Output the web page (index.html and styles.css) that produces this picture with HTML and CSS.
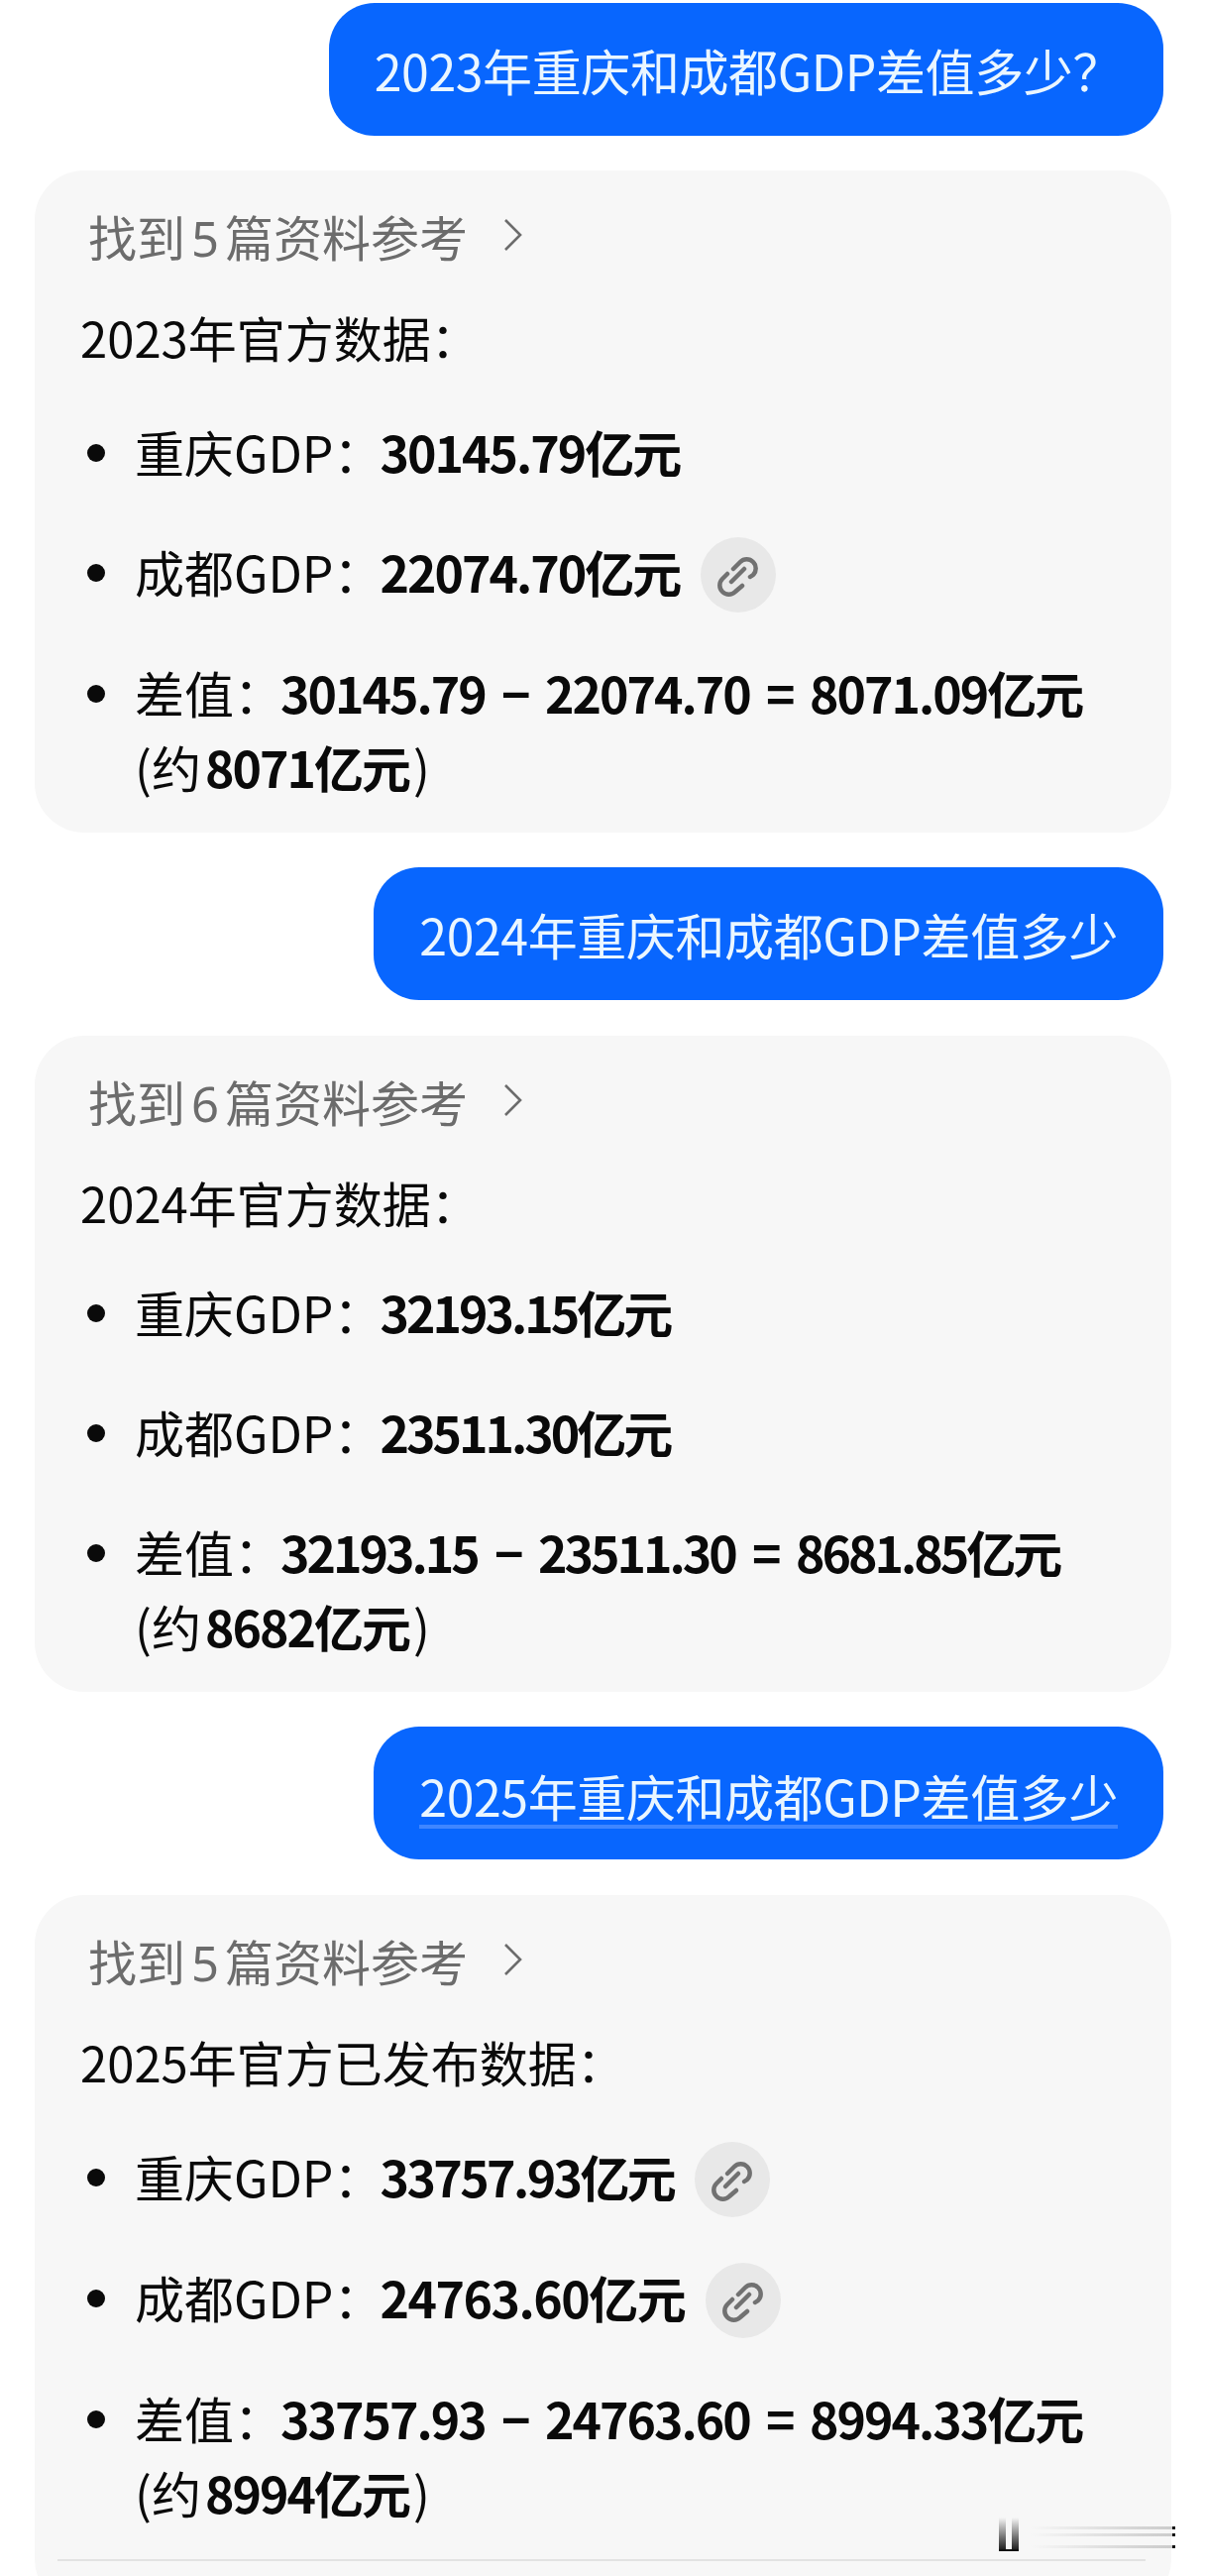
FILE: index.html
```html
<!DOCTYPE html>
<html lang="zh-CN">
<head>
  <meta charset="UTF-8">
  <meta name="viewport" content="width=device-width, initial-scale=1.0">
  <title>重庆和成都GDP差值</title>
  <link rel="stylesheet" href="styles.css">
</head>
<body>
  <svg class="defs" width="0" height="0" aria-hidden="true">
    <symbol id="link" viewBox="0 0 76 76">
      <path d="M33 32l7-7a9 9 0 0 1 13 13l-3 2M42 49l-7 6a9 9 0 0 1-13-13l5-5M31 45l13-13" fill="none" stroke="#717171" stroke-width="4.500" stroke-linecap="round"/>
    </symbol>
    <symbol id="chev" viewBox="0 0 24 36">
      <path d="M4 3l15 15L4 33" fill="none" stroke="#6c6c6c" stroke-width="2.600"/>
    </symbol>
  </svg>

  <main class="chat">
    <div class="q q-a">2023年重庆和成都GDP差值多少？</div>
    <section class="card">
      <div class="refs"><span>找到<span class="refs-n">5</span>篇资料参考</span><svg class="chev"><use href="#chev"/></svg></div>
      <p class="lead">2023年官方数据：</p>
      <ul class="list list-gap">
        <li>重庆GDP：<b>30145.79亿元</b></li>
        <li>成都GDP：<b>22074.70亿元</b><span class="link"><svg><use href="#link"/></svg></span></li>
        <li>差值：<b>30145.79 − 22074.70 = 8071.09亿元</b><br>(约<b class="approx">8071亿元</b>)</li>
      </ul>
    </section>

    <div class="q">2024年重庆和成都GDP差值多少</div>
    <section class="card">
      <div class="refs"><span>找到<span class="refs-n">6</span>篇资料参考</span><svg class="chev"><use href="#chev"/></svg></div>
      <p class="lead">2024年官方数据：</p>
      <ul class="list">
        <li>重庆GDP：<b class="tight">32193.15亿元</b></li>
        <li>成都GDP：<b class="tight">23511.30亿元</b></li>
        <li>差值：<b class="tight">32193.15 − 23511.30 = 8681.85亿元</b><br>(约<b class="approx">8682亿元</b>)</li>
      </ul>
    </section>

    <div class="q"><span class="q-edit">2025年重庆和成都GDP差值多少</span></div>
    <section class="card card-last">
      <div class="refs"><span>找到<span class="refs-n">5</span>篇资料参考</span><svg class="chev"><use href="#chev"/></svg></div>
      <p class="lead">2025年官方已发布数据：</p>
      <ul class="list list-gap">
        <li>重庆GDP：<b class="snug">33757.93亿元</b><span class="link"><svg><use href="#link"/></svg></span></li>
        <li>成都GDP：<b class="loose">24763.60亿元</b><span class="link"><svg><use href="#link"/></svg></span></li>
        <li>差值：<b>33757.93 − 24763.60 = 8994.33亿元</b><br>(约<b class="approx">8994亿元</b>)</li>
      </ul>
      <hr class="rule">
      <div class="stamp"><i class="stamp-bar"></i><i class="stamp-dash"></i><i class="stamp-dash stamp-dash-mid"></i><i class="stamp-dash stamp-dash-low"></i></div>
    </section>
  </main>
</body>
</html>
```

FILE: styles.css
```css
html, body { margin: 0; background: #fff; }
body { height: 2599px; overflow: hidden; font-family: "Noto Sans CJK SC", "Noto Sans", sans-serif; color: #0a0a0a; }
.defs { position: absolute; }
.chat { display: flex; flex-direction: column; }

/* question bubbles */
.q { align-self: flex-end; box-sizing: border-box; height: 134px; margin: 0 42px 36px 0; padding: 0 46px; display: flex; align-items: center; background: #0866fe; color: #eaf6ff; font-size: 50px; border-radius: 46px; white-space: nowrap; letter-spacing: -0.4px; }
.q-a { margin-top: 3px; margin-bottom: 35px; padding-right: 42px; }
.q-edit { border-bottom: 4px solid #3f86ff; line-height: 60px; height: 60px; margin-top: 8px; }

/* answer cards */
.card { position: relative; box-sizing: border-box; margin: 0 34px 35px 35px; padding: 35px 0 0 46px; background: #f7f7f7; border-radius: 50px; height: 668px; }
.card:nth-of-type(2) { height: 662px; }
.card-last { height: 720px; margin-bottom: 0; }
.refs { display: flex; align-items: center; gap: 34px; height: 60px; padding-left: 8px; color: #6c6c6c; font-size: 49px; }
.refs-n { margin: 0 6px; font-family: "Noto Sans", sans-serif; }
.chev { width: 24px; height: 36px; }
.lead { margin: 43px 0 0; font-size: 49px; line-height: 60px; }

.list { margin: 43px 0 0; padding: 0; list-style: none; font-size: 50px; line-height: 75px; }
.list-gap { margin-top: 48px; }
.list li { position: relative; padding-left: 55px; min-height: 75px; margin-bottom: 46px; white-space: nowrap; }
.list li::before { content: ""; position: absolute; left: 7px; top: 30px; width: 18px; height: 18px; border-radius: 50%; background: #0a0a0a; }
.list b { margin-left: -3px; font-weight: 600; letter-spacing: -2px; word-spacing: 7px; }
.list b.tight { letter-spacing: -3px; word-spacing: 9px; }
.list b.snug { letter-spacing: -2.600px; }
.list b.loose { letter-spacing: -1.500px; }
.list b.approx { margin-left: 4px; margin-right: 4px; }

.link { display: inline-flex; width: 76px; height: 76px; margin-left: 21px; border-radius: 50%; background: #e8e8e8; vertical-align: top; transform: translateY(3px); }
.link svg { width: 76px; height: 76px; }

.rule { position: absolute; left: 23px; right: 26px; top: 670px; margin: 0; border: 0; border-top: 2px solid #e2e2e2; }

/* smudged mark in the corner */
.stamp { position: absolute; left: 965px; top: 628px; width: 186px; height: 34px; }
.stamp-bar { position: absolute; left: 8px; top: 0; width: 20px; height: 32px; border-bottom: 2px solid #111; background: linear-gradient(#f7f7f7, #222) left / 7px 100% no-repeat, linear-gradient(#f7f7f7, #222) right / 7px 100% no-repeat; }
.stamp-dash { position: absolute; left: 40px; right: 0; top: 9px; height: 3px; background: linear-gradient(90deg, #f7f7f7, #d4d4d4 75%, #ccc 98%, #111 98%); }
.stamp-dash-mid { top: 16px; }
.stamp-dash-low { top: 28px; }
```
